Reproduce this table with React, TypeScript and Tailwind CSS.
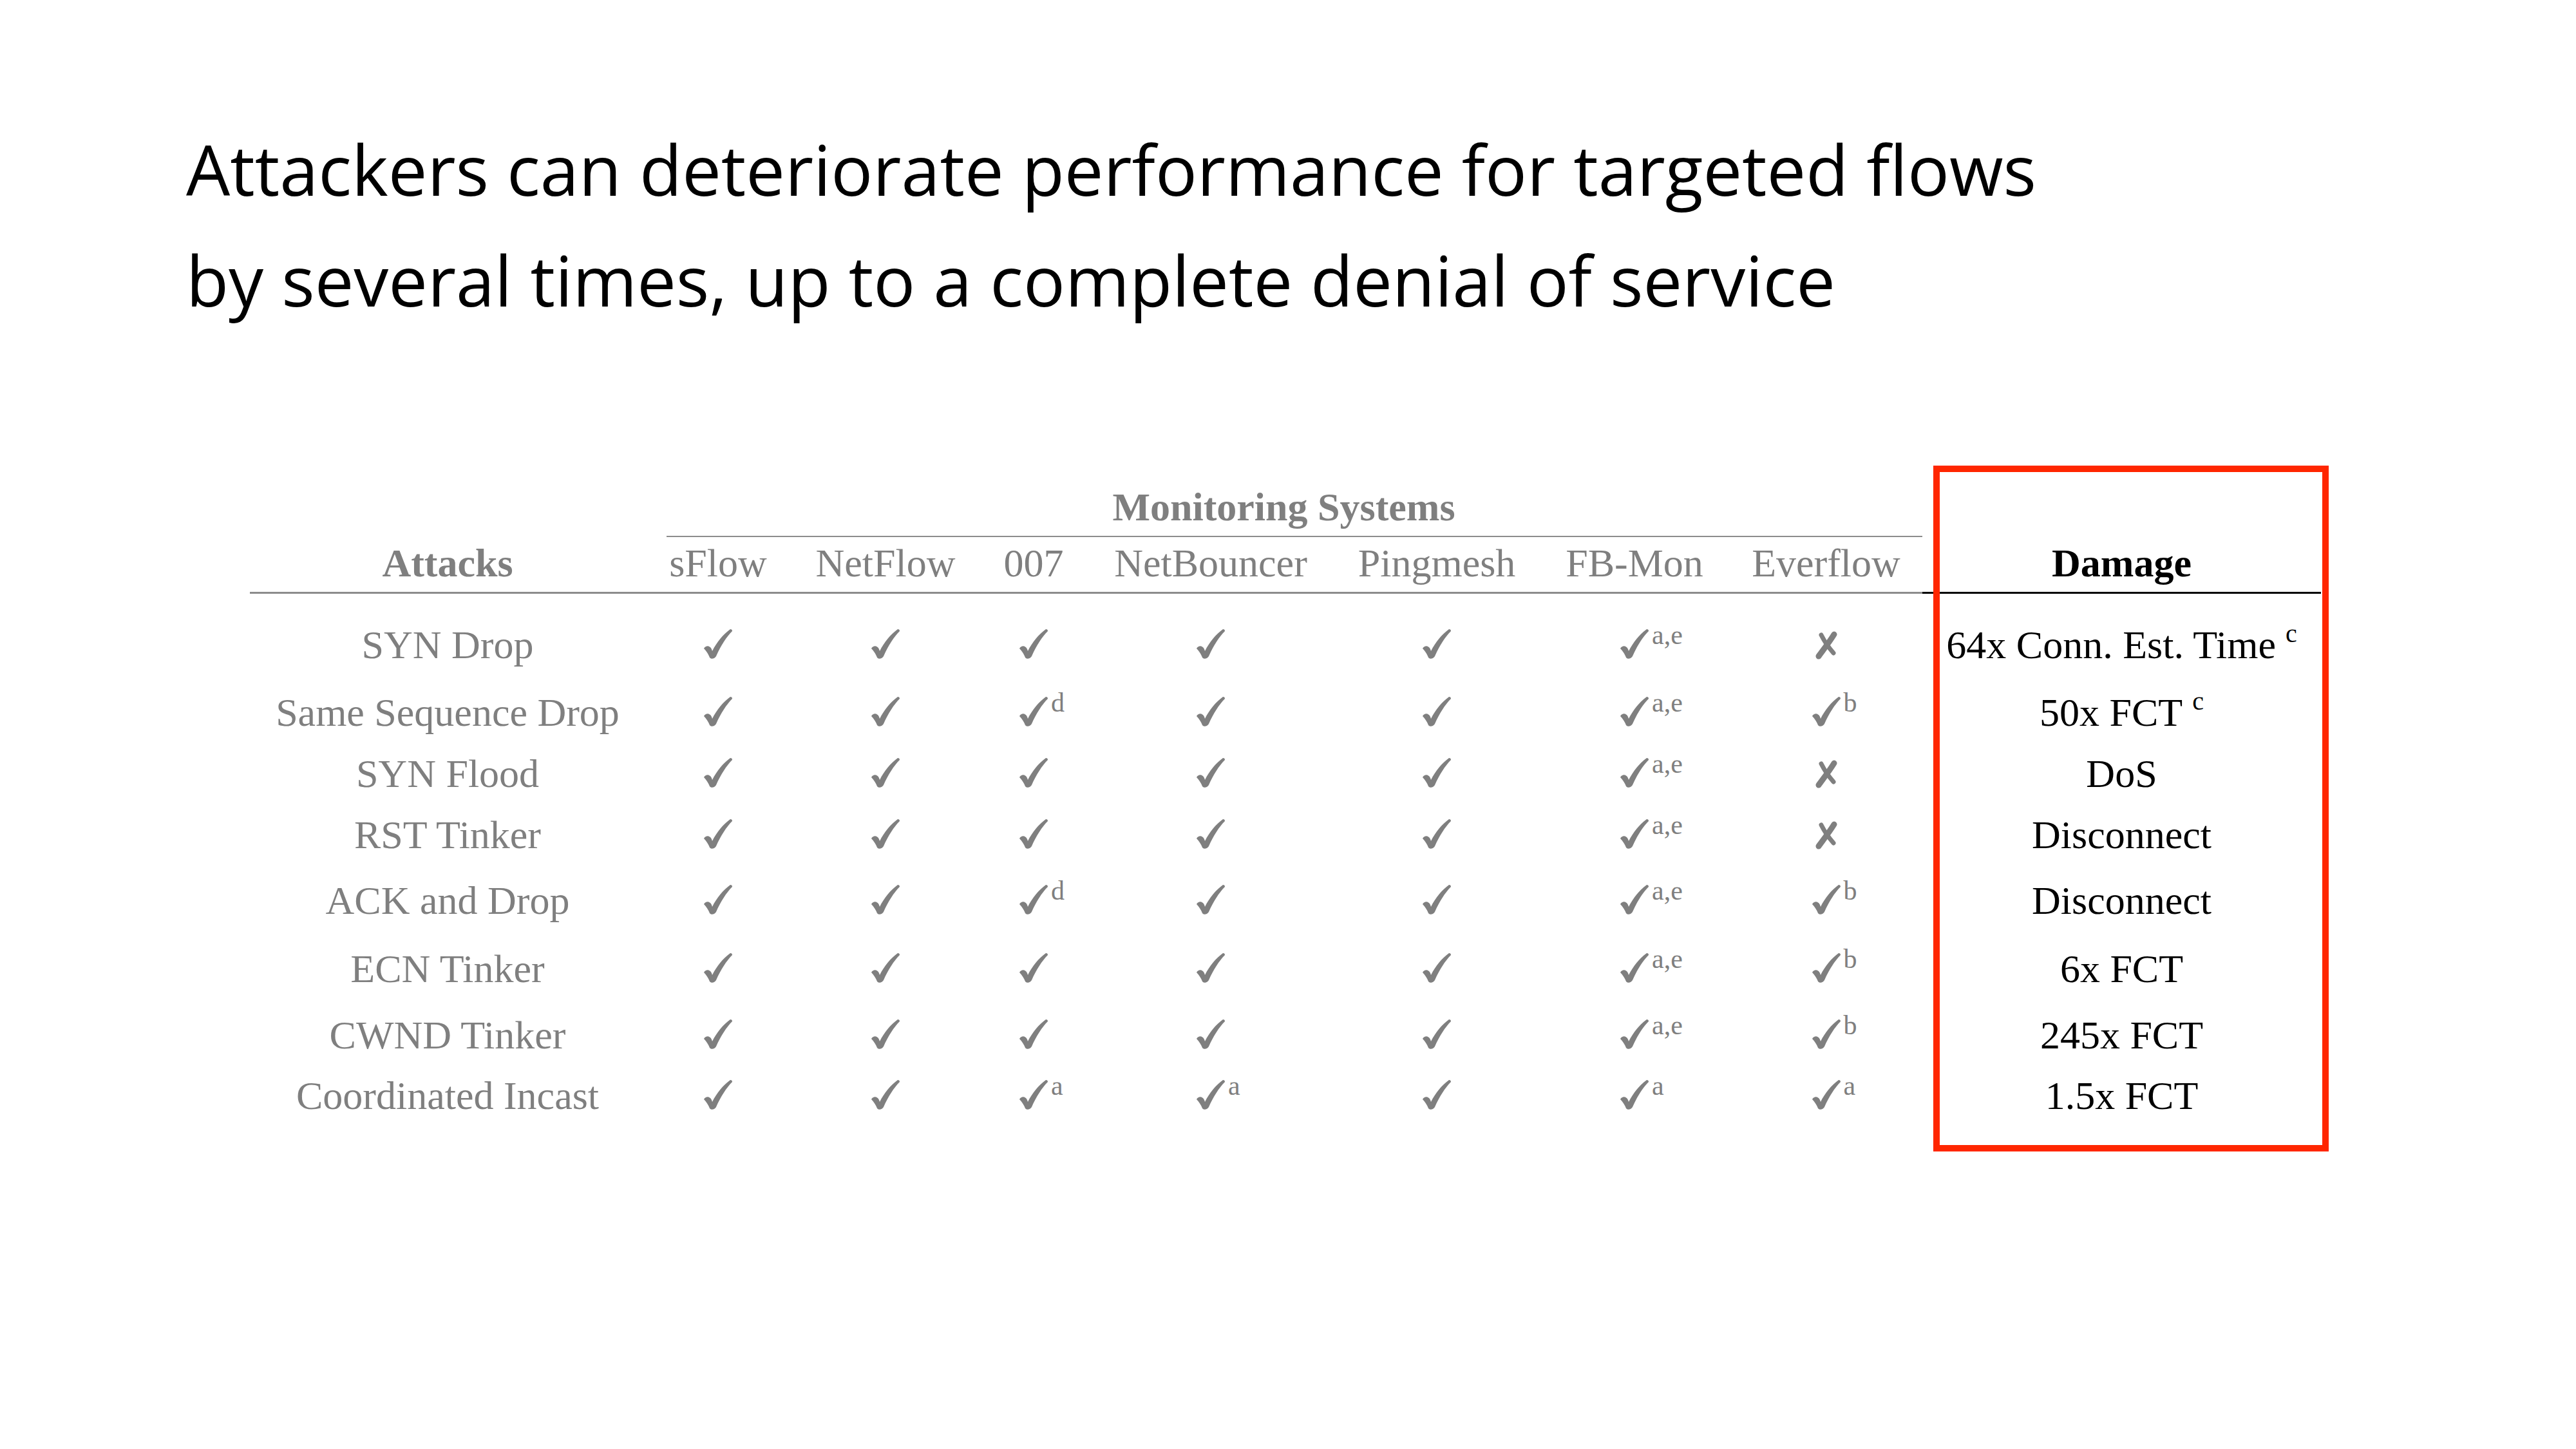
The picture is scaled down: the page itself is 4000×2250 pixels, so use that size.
import React from 'react';

type Mark = { kind: 'yes' | 'no'; sup?: string };

const y = (sup?: string): Mark => ({ kind: 'yes', sup });
const n = (): Mark => ({ kind: 'no' });

const attacks: { name: string; marks: Mark[]; damage: string; note?: string }[] = [
  { name: 'SYN Drop', marks: [y(), y(), y(), y(), y(), y('a,e'), n()], damage: '64x Conn. Est. Time', note: 'c' },
  { name: 'Same Sequence Drop', marks: [y(), y(), y('d'), y(), y(), y('a,e'), y('b')], damage: '50x FCT', note: 'c' },
  { name: 'SYN Flood', marks: [y(), y(), y(), y(), y(), y('a,e'), n()], damage: 'DoS' },
  { name: 'RST Tinker', marks: [y(), y(), y(), y(), y(), y('a,e'), n()], damage: 'Disconnect' },
  { name: 'ACK and Drop', marks: [y(), y(), y('d'), y(), y(), y('a,e'), y('b')], damage: 'Disconnect' },
  { name: 'ECN Tinker', marks: [y(), y(), y(), y(), y(), y('a,e'), y('b')], damage: '6x FCT' },
  { name: 'CWND Tinker', marks: [y(), y(), y(), y(), y(), y('a,e'), y('b')], damage: '245x FCT' },
  { name: 'Coordinated Incast', marks: [y(), y(), y('a'), y('a'), y(), y('a'), y('a')], damage: '1.5x FCT' },
];

const systems = ['sFlow', 'NetFlow', '007', 'NetBouncer', 'Pingmesh', 'FB-Mon', 'Everflow'];

const cols = 'grid grid-cols-[614px_226px_294px_166px_384px_318px_296px_299px_619px]';

// brush-style check, like the dingbat one in the paper table
const CheckMark = () => (
  <svg viewBox="0 0 44 46" className="block w-[44px] h-[46px]" fill="#7f7f7f">
    <path d="M0 30 C3 25 9 25 12 31 L13 34 C20 20 30 8 41 0 C43 0 44 1 44 3 C35 12 26 26 19 42 C17 46 11 47 9 44 C7 39 4 34 0 30 Z" />
  </svg>
);

const CrossMark = () => (
  <svg viewBox="0 0 36 45" className="block w-[36px] h-[45px]" fill="none" stroke="#7f7f7f" strokeLinecap="round">
    <path d="M30 6 C24 16 14 29 6 40" strokeWidth="9" />
    <path d="M10 7 C15 17 22 27 29 35" strokeWidth="7" />
  </svg>
);

const MarkCell = ({ mark }: { mark: Mark }) => (
  <div className="flex justify-center items-start">
    {mark.kind === 'yes' ? (
      <div className="relative mt-[16px]">
        <CheckMark />
        {mark.sup && (
          <span className="absolute left-[calc(100%+5px)] top-[-12px] text-[42px] leading-[42px] whitespace-nowrap">
            {mark.sup}
          </span>
        )}
      </div>
    ) : (
      <div className="mt-[18px]">
        <CrossMark />
      </div>
    )}
  </div>
);

export default function App() {
  return (
    <div className="relative w-[4000px] h-[2250px] bg-white overflow-hidden">
      {/* Slide title */}
      <div className="pl-[289px] pt-[177px] text-[108px] leading-[172px] text-black [font-family:'Open_Sans',sans-serif]">
        <p>Attackers can deteriorate performance for targeted flows</p>
        <p>by several times, up to a complete denial of service</p>
      </div>

      {/* Table */}
      <div className="ml-[388px] mt-[226px] w-[3216px] text-[62px] leading-[80px] text-[#7f7f7f] [font-family:'Liberation_Serif','Times_New_Roman',serif]">
        <div className={cols}>
          <div />
          <div className="col-span-7 ml-[33px] pr-[33px] h-[87px] border-b-2 border-[#8c8c8c] text-center font-bold">
            Monitoring Systems
          </div>
          <div />

          <div className="pb-[5px] border-b-[3px] border-[#8c8c8c] text-center font-bold">Attacks</div>
          {systems.map((s) => (
            <div key={s} className="pb-[5px] border-b-[3px] border-[#8c8c8c] text-center">
              {s}
            </div>
          ))}
          <div className="pb-[5px] border-b-[3px] border-black text-center font-bold text-black">Damage</div>
        </div>

        <div className={`${cols} mt-[39px] grid-rows-[105px_95px_95px_102px_106px_103px_94px_80px]`}>
          {attacks.map((row) => (
            <React.Fragment key={row.name}>
              <div className="text-center whitespace-nowrap">{row.name}</div>
              {row.marks.map((m, i) => (
                <MarkCell key={i} mark={m} />
              ))}
              <div className="text-center text-black whitespace-nowrap">
                {row.damage}
                {row.note && (
                  <span className="relative -top-[25px] ml-[15px] text-[40px] leading-none">{row.note}</span>
                )}
              </div>
            </React.Fragment>
          ))}
        </div>
      </div>

      {/* Highlight box around the damage column */}
      <div className="absolute left-[3002px] top-[723px] w-[614px] h-[1065px] border-[10px] border-[#ff2600]" />
    </div>
  );
}
